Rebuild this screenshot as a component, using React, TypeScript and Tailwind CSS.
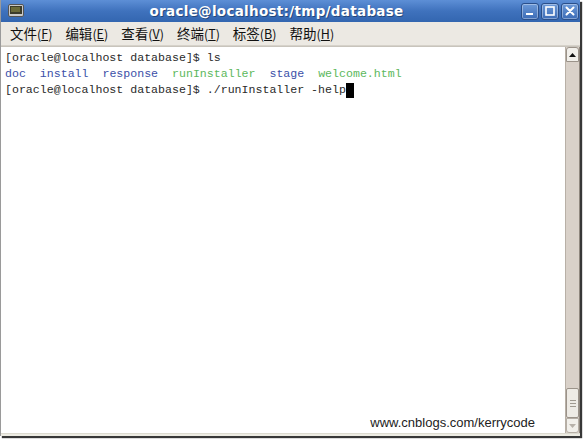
import React from 'react';

const MENUS = [
  { label: '文件', key: 'F' },
  { label: '编辑', key: 'E' },
  { label: '查看', key: 'V' },
  { label: '终端', key: 'T' },
  { label: '标签', key: 'B' },
  { label: '帮助', key: 'H' },
];

function TitleButton({ kind }: { kind: 'min' | 'max' | 'close' }) {
  return (
    <div className="w-[18px] h-[17px] rounded-[3px] border border-[#2a4f8a] bg-gradient-to-b from-[#6d9ad8] to-[#3b6bb6] shadow-[inset_0_0_0_1px_rgba(255,255,255,0.35)] flex items-center justify-center">
      <svg width="12" height="12" viewBox="0 0 12 12">
        {kind === 'min' && <rect x="2" y="8" width="7" height="2" fill="#fff" />}
        {kind === 'max' && <rect x="2" y="2" width="8" height="8" fill="none" stroke="#fff" strokeWidth="1.6" />}
        {kind === 'close' && (
          <path d="M2.5 2.5 L9.5 9.5 M9.5 2.5 L2.5 9.5" stroke="#fff" strokeWidth="2" strokeLinecap="round" />
        )}
      </svg>
    </div>
  );
}

export default function App() {
  const mono = { fontFamily: '"Liberation Mono", "DejaVu Sans Mono", monospace' };
  return (
    <div className="w-[586px] h-[441px] bg-white overflow-hidden">
      <div className="w-[580px] h-[436px] flex flex-col border-l border-[#9a9a9a] shadow-[2px_2px_1px_rgba(20,20,20,0.85)]">
        {/* title bar */}
        <div className="h-[22px] flex items-center bg-gradient-to-b from-[#5d8fd6] via-[#3f72bd] to-[#3366b0] pl-[6px] pr-[1px]">
          <svg width="16" height="14" viewBox="0 0 16 14" className="ml-[1px]">
            <rect x="0.5" y="0.5" width="15" height="12" rx="1.5" fill="#c9c9c9" stroke="#555" />
            <rect x="2" y="2" width="12" height="8" fill="#3b3b2a" />
            <rect x="3" y="3" width="9" height="5" fill="#6a6a3a" />
          </svg>
          <div
            className="flex-1 text-center text-white font-bold text-[13.5px] leading-[22px] pl-[8px] tracking-[0.3px]"
            style={{ fontFamily: '"DejaVu Sans", "Liberation Sans", sans-serif', textShadow: '1px 1px 0 rgba(0,0,0,0.35)' }}
          >
            oracle@localhost:/tmp/database
          </div>
          <div className="flex gap-[2px]">
            <TitleButton kind="min" />
            <TitleButton kind="max" />
            <TitleButton kind="close" />
          </div>
        </div>

        {/* menu bar */}
        <div
          className="h-[24px] flex items-center bg-[#ece9e3] border-b border-[#d6d2ca] pl-[9px] gap-[13px] text-[13.5px] text-[#111]"
          style={{ fontFamily: '"Noto Sans CJK SC", "Noto Sans", sans-serif' }}
        >
          {MENUS.map((m) => (
            <span key={m.key} className="whitespace-nowrap leading-none">
              {m.label}
              <span className="text-[12.5px]">
                (<span className="underline">{m.key}</span>)
              </span>
            </span>
          ))}
        </div>

        {/* terminal */}
        <div className="flex-1 flex min-h-0 border-t border-[#c8c4bc]">
          <div className="flex-1 bg-white relative pl-[4px] pt-[3px] text-[11.6px] leading-[16px] text-[#2a2a2a]" style={mono}>
            <div className="whitespace-pre">[oracle@localhost database]$ ls</div>
            <div className="whitespace-pre">
              <span className="text-[#3b4fa8]">doc</span>{'  '}
              <span className="text-[#3b4fa8]">install</span>{'  '}
              <span className="text-[#3b4fa8]">response</span>{'  '}
              <span className="text-[#5cb85c]">runInstaller</span>{'  '}
              <span className="text-[#3b4fa8]">stage</span>{'  '}
              <span className="text-[#5cb85c]">welcome.html</span>
            </div>
            <div className="whitespace-pre flex items-center">
              [oracle@localhost database]$ ./runInstaller -help
              <span className="inline-block w-[8px] h-[15px] bg-black" />
            </div>
            <div
              className="absolute right-[30px] bottom-[2px] text-[13px] text-[#222]"
              style={{ fontFamily: '"Liberation Sans", Arial, sans-serif' }}
            >
              www.cnblogs.com/kerrycode
            </div>
          </div>

          {/* scrollbar */}
          <div className="w-[15px] bg-[#d9d1c9] border-l border-[#b8b0a6] border-r border-r-[#8f877e] flex flex-col">
            <div className="h-[15px] bg-[#f2f0eb] border border-[#9b938a] rounded-t-[3px] flex items-center justify-center">
              <svg width="7" height="4" viewBox="0 0 7 4"><path d="M0 4 L3.5 0 L7 4 Z" fill="#111" /></svg>
            </div>
            <div className="flex-1" />
            <div className="h-[30px] bg-[#eeebe5] border border-[#9b938a] rounded-[2px] flex flex-col items-center justify-center gap-[2px]">
              <div className="w-[6px] h-px bg-[#a09a90]" />
              <div className="w-[6px] h-px bg-[#a09a90]" />
              <div className="w-[6px] h-px bg-[#a09a90]" />
            </div>
            <div className="h-[15px] bg-[#f2f0eb] border border-[#b5aea5] rounded-b-[3px] flex items-center justify-center">
              <svg width="7" height="4" viewBox="0 0 7 4"><path d="M0 0 L3.5 4 L7 0 Z" fill="#b8b2aa" /></svg>
            </div>
          </div>
        </div>
        <div className="h-[3px] bg-[#ecebe2] border-t border-[#dcdad0]" />
      </div>
    </div>
  );
}
